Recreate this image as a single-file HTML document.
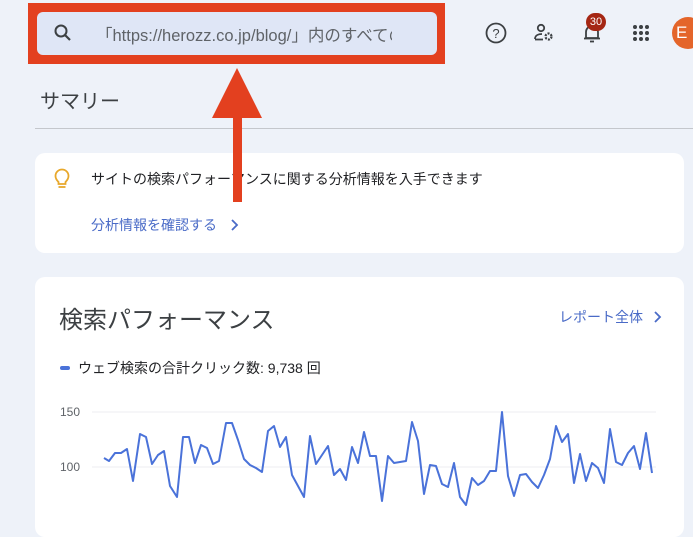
<!DOCTYPE html>
<html><head><meta charset="utf-8"><style>
*{margin:0;padding:0;box-sizing:border-box}
body{width:693px;height:507px;overflow:hidden;background:#eef2f9;font-family:"Liberation Sans","Noto Sans CJK JP",sans-serif;position:relative;color:#3c4043}
.abs{position:absolute}
.card{position:absolute;background:#fff;border-radius:10px}
</style></head><body>
<div class="abs" style="left:28px;top:3px;width:417px;height:61px;background:#e3401f"></div>
<div class="abs" style="left:37px;top:12px;width:400px;height:43px;background:#dfe6f6;border-radius:6px"></div>
<svg class="abs" style="left:52px;top:22px" width="22" height="22" viewBox="0 0 22 22"><circle cx="9" cy="9" r="5.5" fill="none" stroke="#3c4043" stroke-width="2"/><line x1="13" y1="13" x2="18" y2="18" stroke="#3c4043" stroke-width="2.2"/></svg>
<div class="abs" style="left:96px;top:22px;font-size:16.5px;color:#5f6368;white-space:nowrap;width:296px;overflow:hidden">「https://herozz.co.jp/blog/」内のすべての</div>
<svg class="abs" style="left:484px;top:21px" width="24" height="24" viewBox="0 0 24 24"><circle cx="12" cy="12" r="9.5" fill="none" stroke="#3c4043" stroke-width="1.8"/><text x="12" y="17" font-size="13" text-anchor="middle" fill="#3c4043" font-family="Liberation Sans">?</text></svg>
<svg class="abs" style="left:532px;top:21px" width="24" height="24" viewBox="0 0 24 24"><circle cx="9" cy="7" r="3.2" fill="none" stroke="#3c4043" stroke-width="1.8"/><path d="M3 18c0-4 4-5 7-5" fill="none" stroke="#3c4043" stroke-width="1.8"/><line x1="3" y1="18.5" x2="11" y2="18.5" stroke="#3c4043" stroke-width="1.8"/><circle cx="16.5" cy="15.5" r="3" fill="none" stroke="#3c4043" stroke-width="2.2" stroke-dasharray="2 1.2"/></svg>
<svg class="abs" style="left:580px;top:21px" width="24" height="24" viewBox="0 0 24 24"><path d="M6 17V11a6 6 0 0 1 12 0v6z" fill="none" stroke="#3c4043" stroke-width="1.8"/><line x1="4" y1="17.5" x2="20" y2="17.5" stroke="#3c4043" stroke-width="1.8"/><line x1="10" y1="20.5" x2="14" y2="20.5" stroke="#3c4043" stroke-width="1.8"/></svg>
<div class="abs" style="left:586px;top:13px;width:20px;height:18px;border-radius:9px;background:#a52714;color:#fff;font-size:11px;text-align:center;line-height:18px">30</div>
<svg class="abs" style="left:631px;top:23px" width="20" height="20" viewBox="0 0 20 20" fill="#3c4043"><circle cx="4" cy="4" r="2"/><circle cx="10" cy="4" r="2"/><circle cx="16" cy="4" r="2"/><circle cx="4" cy="10" r="2"/><circle cx="10" cy="10" r="2"/><circle cx="16" cy="10" r="2"/><circle cx="4" cy="16" r="2"/><circle cx="10" cy="16" r="2"/><circle cx="16" cy="16" r="2"/></svg>
<div class="abs" style="left:672px;top:17px;width:32px;height:32px;border-radius:50%;background:#e4652a;color:#fff;font-size:17px;line-height:32px;padding-left:4px">E</div>
<div class="abs" style="left:40px;top:85px;font-size:20px;color:#3c4043">サマリー</div>
<div class="abs" style="left:35px;top:128px;width:658px;height:1px;background:#c4c7cc"></div>

<div class="card" style="left:35px;top:153px;width:649px;height:100px"></div>
<svg class="abs" style="left:52px;top:167px" width="20" height="24" viewBox="0 0 20 24"><path d="M6.5 15c-2-2-3-3.5-3-6a6.5 6.5 0 0 1 13 0c0 2.5-1 4-3 6v2h-7z" fill="none" stroke="#e8a82b" stroke-width="1.8"/><line x1="6.5" y1="20" x2="13.5" y2="20" stroke="#e8a82b" stroke-width="1.8"/></svg>
<div class="abs" style="left:91px;top:169px;font-size:14px;color:#202124;white-space:nowrap">サイトの検索パフォーマンスに関する分析情報を入手できます</div>
<div class="abs" style="left:91px;top:215px;font-size:14px;color:#4a6bc7;white-space:nowrap">分析情報を確認する</div>
<svg class="abs" style="left:229px;top:218px" width="12" height="14" viewBox="0 0 12 14"><path d="M3 2l5 5-5 5" fill="none" stroke="#4a6bc7" stroke-width="1.8"/></svg>

<div class="card" style="left:35px;top:277px;width:649px;height:260px"></div>
<div class="abs" style="left:59px;top:300px;font-size:24px;color:#3c4043;white-space:nowrap">検索パフォーマンス</div>
<div class="abs" style="left:559px;top:307px;font-size:14px;color:#4a6bc7;white-space:nowrap">レポート全体</div>
<svg class="abs" style="left:652px;top:310px" width="12" height="14" viewBox="0 0 12 14"><path d="M3 2l5 5-5 5" fill="none" stroke="#4a6bc7" stroke-width="1.8"/></svg>
<div class="abs" style="left:60px;top:366px;width:10px;height:4px;border-radius:2px;background:#4a72d9"></div>
<div class="abs" style="left:78px;top:358px;font-size:14px;color:#202124;white-space:nowrap">ウェブ検索の合計クリック数: 9,738 回</div>
<div class="abs" style="left:60px;top:405px;font-size:12px;color:#5f6368">150</div>
<div class="abs" style="left:60px;top:460px;font-size:12px;color:#5f6368">100</div>
<svg class="abs" style="left:0;top:0" width="693" height="507">
<line x1="92" y1="412" x2="656" y2="412" stroke="#eceef1"/>
<line x1="92" y1="467" x2="656" y2="467" stroke="#eceef1"/>
<polyline fill="none" stroke="#4a72d9" stroke-width="2" stroke-linejoin="round" points="104,458 109,461 115,453 121,453 127,449 133,481 140,434 146,437 152,464 158,455 164,451 170,486 177,497 183,437 189,437 195,463 201,445 207,448 213,464 219,461 226,423 232,423 238,440 244,459 250,465 256,468 262,472 268,431 274,426 280,447 286,437 292,475 298,486 304,497 310,436 316,464 322,455 328,446 334,475 340,469 346,480 352,447 358,463 364,432 370,456 376,456 382,501 388,456 394,463 400,462 406,461 412,422 418,441 424,494 430,465 436,466 442,484 448,487 454,463 460,497 466,505 472,478 478,485 484,481 490,471 496,471 502,412 508,476 514,496 520,475 526,474 532,482 538,488 544,475 550,459 556,426 562,442 568,434 574,483 580,454 586,481 592,463 598,468 604,483 610,429 616,462 622,465 628,453 634,446 640,469 646,433 652,473"/>
<rect x="233" y="115" width="9" height="87" fill="#e3401f"/>
<polygon points="237,68 212,118 262,118" fill="#e3401f"/>
</svg>
</body></html>
